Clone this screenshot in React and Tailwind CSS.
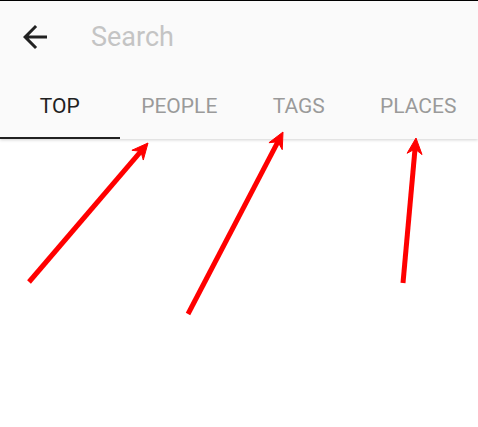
const arrows = [
  { from: [29, 282], to: [148, 143] },
  { from: [188, 314], to: [283, 132] },
  { from: [403, 283], to: [416, 138] },
];

function headPoints([x1, y1], [x2, y2]) {
  const dx = x2 - x1;
  const dy = y2 - y1;
  const len = Math.hypot(dx, dy);
  const ux = dx / len;
  const uy = dy / len;
  const px = -uy;
  const py = ux;
  const back = 16;
  const notch = 11;
  const half = 7.5;
  const pts = [
    [x2, y2],
    [x2 - ux * back + px * half, y2 - uy * back + py * half],
    [x2 - ux * notch, y2 - uy * notch],
    [x2 - ux * back - px * half, y2 - uy * back - py * half],
  ];
  return pts.map((p) => p.join(",")).join(" ");
}

function lineEnd([x1, y1], [x2, y2]) {
  const dx = x2 - x1;
  const dy = y2 - y1;
  const len = Math.hypot(dx, dy);
  return [x2 - (dx / len) * 10, y2 - (dy / len) * 10];
}

const tabs = ["TOP", "PEOPLE", "TAGS", "PLACES"];

export default function App() {
  return (
    <div className="relative h-[427px] w-full overflow-hidden bg-white font-['Roboto','Liberation_Sans',sans-serif]">
      <div className="border-t border-black bg-[#fafafa] shadow-[0_1px_3px_rgba(0,0,0,0.18)]">
        <div className="flex h-[72px] items-center pl-[17px]">
          <svg width="36" height="36" viewBox="0 0 24 24" fill="#212121">
            <path d="M20 11H7.83l5.59-5.59L12 4l-8 8 8 8 1.41-1.41L7.83 13H20v-2z" />
          </svg>
          <span className="ml-[38px] pt-[1px] text-[27px] text-[#c4c4c4]">Search</span>
        </div>
        <div className="grid h-[66px] grid-cols-4">
          {tabs.map((t, i) => (
            <div
              key={t}
              className={
                i === 0
                  ? "flex items-center justify-center border-b-2 border-[#212121] pt-[3px] text-[21px] font-normal text-[#212121]"
                  : "flex items-center justify-center border-b-2 border-transparent pt-[3px] text-[21px] font-normal text-[#9a9a9a]"
              }
            >
              {t}
            </div>
          ))}
        </div>
      </div>

      <svg className="pointer-events-none absolute left-0 top-0" width="478" height="427">
        {arrows.map((a, i) => {
          const [ex, ey] = lineEnd(a.from, a.to);
          return (
            <g key={i} fill="#ff0000" stroke="#ff0000">
              <line x1={a.from[0]} y1={a.from[1]} x2={ex} y2={ey} strokeWidth="5" />
              <polygon points={headPoints(a.from, a.to)} strokeWidth="1" strokeLinejoin="miter" />
            </g>
          );
        })}
      </svg>
    </div>
  );
}
